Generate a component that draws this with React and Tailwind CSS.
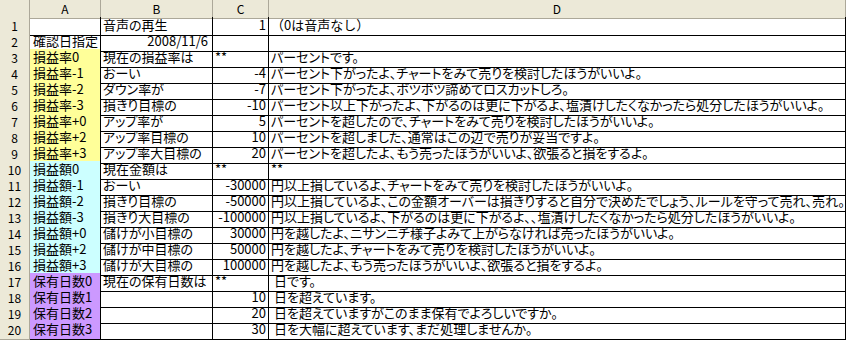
// Spreadsheet view: 音声メッセージ設定シート

const ROWS = [
  { a: '', b: '音声の再生', c: '1', d: '（0は音声なし）', dPlain: true },
  { a: '確認日指定', b: '2008/11/6', bRight: true, c: '', d: '' },
  { a: '損益率0', fill: 'yellow', b: '現在の損益率は', c: '**', cLeft: true, d: 'パーセントです。' },
  { a: '損益率-1', fill: 'yellow', b: 'おーい', c: '-4', d: 'パーセント下がったよ、チャートをみて売りを検討したほうがいいよ。' },
  { a: '損益率-2', fill: 'yellow', b: 'ダウン率が', c: '-7', d: 'パーセント下がったよ、ボツボツ諦めてロスカットしろ。' },
  { a: '損益率-3', fill: 'yellow', b: '損きり目標の', c: '-10', d: 'パーセント以上下がったよ、下がるのは更に下がるよ、塩漬けしたくなかったら処分したほうがいいよ。' },
  { a: '損益率+0', fill: 'yellow', b: 'アップ率が', c: '5', d: 'パーセントを超したので、チャートをみて売りを検討したほうがいいよ。' },
  { a: '損益率+2', fill: 'yellow', b: 'アップ率目標の', c: '10', d: 'パーセントを超しました、通常はこの辺で売りが妥当ですよ。' },
  { a: '損益率+3', fill: 'yellow', b: 'アップ率大目標の', c: '20', d: 'パーセントを超したよ、もう売ったほうがいいよ、欲張ると損をするよ。' },
  { a: '損益額0', fill: 'cyan', b: '現在金額は', c: '**', cLeft: true, d: '**' },
  { a: '損益額-1', fill: 'cyan', b: 'おーい', c: '-30000', d: '円以上損しているよ、チャートをみて売りを検討したほうがいいよ。' },
  { a: '損益額-2', fill: 'cyan', b: '損きり目標の', c: '-50000', d: '円以上損しているよ、この金額オーバーは損きりすると自分で決めたでしょう、ルールを守って売れ、売れ。' },
  { a: '損益額-3', fill: 'cyan', b: '損きり大目標の', c: '-100000', d: '円以上損しているよ、下がるのは更に下がるよ、、塩漬けしたくなかったら処分したほうがいいよ。' },
  { a: '損益額+0', fill: 'cyan', b: '儲けが小目標の', c: '30000', d: '円を越したよ、ニサンニチ様子よみて上がらなければ売ったほうがいいよ。' },
  { a: '損益額+2', fill: 'cyan', b: '儲けが中目標の', c: '50000', d: '円を越したよ、チャートをみて売りを検討したほうがいいよ。' },
  { a: '損益額+3', fill: 'cyan', b: '儲けが大目標の', c: '100000', d: '円を越したよ、もう売ったほうがいいよ、欲張ると損をするよ。' },
  { a: '保有日数0', fill: 'purple', b: '現在の保有日数は', c: '**', cLeft: true, d: '日です。', dIndent: true },
  { a: '保有日数1', fill: 'purple', b: '', c: '10', d: '日を超えています。', dIndent: true },
  { a: '保有日数2', fill: 'purple', b: '', c: '20', d: '日を超えていますがこのまま保有でよろしいですか。', dIndent: true },
  { a: '保有日数3', fill: 'purple', b: '', c: '30', d: '日を大幅に超えています、まだ処理しませんか。', dIndent: true },
];

const FILL_CLASSES = {
  yellow: 'bg-[#ffff99]',
  cyan: 'bg-[#ccffff]',
  purple: 'bg-[#cc99ff]',
};

const GRID = 'grid grid-cols-[30px_71px_112px_56px_577px]';
const HEAD_CELL = 'flex items-center justify-center border-r border-b border-[#aca899] bg-[#ece9d8] text-[12px] text-[#000]';
const CELL = 'whitespace-nowrap border-r border-b border-black leading-[15px]';
// palt narrows kana the way MS PGothic does
const PALT = '[font-feature-settings:"palt"]';

const SheetRow = ({ index, row }) => (
  <div className={`${GRID} h-4`}>
    <div className={HEAD_CELL}>{index + 1}</div>
    <div className={`${CELL} ${PALT} pl-[3px] ${row.fill ? FILL_CLASSES[row.fill] : ''}`}>{row.a}</div>
    <div className={`${CELL} ${PALT} ${row.bRight ? 'pr-[4px] text-right' : 'pl-[2px]'}`}>{row.b}</div>
    <div className={`${CELL} ${row.cLeft ? 'pl-[2px]' : 'pr-[2px] text-right'}`}>{row.c}</div>
    <div
      className={`${CELL} overflow-hidden ${row.dPlain ? '' : PALT} ${row.dIndent ? 'pl-[5px]' : 'pl-[2px]'}`}
    >
      {row.d}
    </div>
  </div>
);

export default function App() {
  return (
    <div className="h-[340px] w-[847px] overflow-hidden bg-white font-['Noto_Sans_CJK_JP','MS_PGothic',sans-serif] text-[13px] text-black">
      <div className={`${GRID} h-[17px]`}>
        <div className={HEAD_CELL} />
        <div className={HEAD_CELL}>A</div>
        <div className={HEAD_CELL}>B</div>
        <div className={HEAD_CELL}>C</div>
        <div className={HEAD_CELL}>D</div>
      </div>
      {ROWS.map((row, index) => (
        <SheetRow key={index} index={index} row={row} />
      ))}
    </div>
  );
}
